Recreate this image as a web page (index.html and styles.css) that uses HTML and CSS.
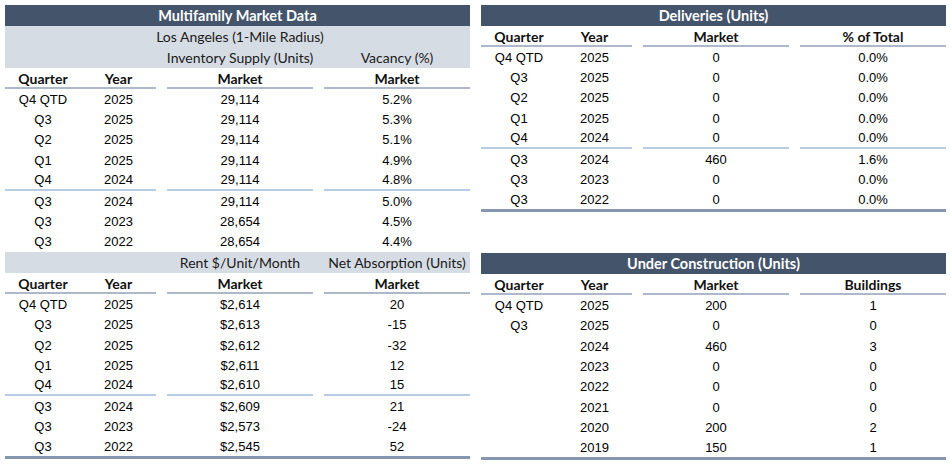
FILE: index.html
```html
<!DOCTYPE html>
<html>
<head>
<meta charset="utf-8">
<link rel="stylesheet" href="styles.css">
</head>
<body>
<div class="page">
  <section class="tbl left">
    <div class="title">Multifamily Market Data</div>
    <div class="band"><span class="c-market">Los Angeles (1-Mile Radius)</span></div>
    <div class="band"><span class="c-market">Inventory Supply (Units)</span><span class="c-last">Vacancy (%)</span></div>
    <div class="row head"><span class="u">Quarter</span><span class="u">Year</span><span></span><span class="u">Market</span><span></span><span class="u">Market</span></div>
    <div class="row"><span>Q4 QTD</span><span>2025</span><span></span><span>29,114</span><span></span><span>5.2%</span></div>
    <div class="row"><span>Q3</span><span>2025</span><span></span><span>29,114</span><span></span><span>5.3%</span></div>
    <div class="row"><span>Q2</span><span>2025</span><span></span><span>29,114</span><span></span><span>5.1%</span></div>
    <div class="row"><span>Q1</span><span>2025</span><span></span><span>29,114</span><span></span><span>4.9%</span></div>
    <div class="row sep"><span class="s">Q4</span><span class="s">2024</span><span></span><span class="s">29,114</span><span></span><span class="s">4.8%</span></div>
    <div class="row"><span>Q3</span><span>2024</span><span></span><span>29,114</span><span></span><span>5.0%</span></div>
    <div class="row"><span>Q3</span><span>2023</span><span></span><span>28,654</span><span></span><span>4.5%</span></div>
    <div class="row"><span>Q3</span><span>2022</span><span></span><span>28,654</span><span></span><span>4.4%</span></div>
    <div class="band"><span class="c-market">Rent $/Unit/Month</span><span class="c-last">Net Absorption (Units)</span></div>
    <div class="row head"><span class="u">Quarter</span><span class="u">Year</span><span></span><span class="u">Market</span><span></span><span class="u">Market</span></div>
    <div class="row"><span>Q4 QTD</span><span>2025</span><span></span><span>$2,614</span><span></span><span>20</span></div>
    <div class="row"><span>Q3</span><span>2025</span><span></span><span>$2,613</span><span></span><span>-15</span></div>
    <div class="row"><span>Q2</span><span>2025</span><span></span><span>$2,612</span><span></span><span>-32</span></div>
    <div class="row"><span>Q1</span><span>2025</span><span></span><span>$2,611</span><span></span><span>12</span></div>
    <div class="row sep"><span class="s">Q4</span><span class="s">2024</span><span></span><span class="s">$2,610</span><span></span><span class="s">15</span></div>
    <div class="row"><span>Q3</span><span>2024</span><span></span><span>$2,609</span><span></span><span>21</span></div>
    <div class="row"><span>Q3</span><span>2023</span><span></span><span>$2,573</span><span></span><span>-24</span></div>
    <div class="row last"><span>Q3</span><span>2022</span><span></span><span>$2,545</span><span></span><span>52</span></div>
  </section>

  <div class="rightcol">
    <section class="tbl">
      <div class="title">Deliveries (Units)</div>
      <div class="row head"><span class="u">Quarter</span><span class="u">Year</span><span></span><span class="u">Market</span><span></span><span class="u">% of Total</span></div>
      <div class="row"><span>Q4 QTD</span><span>2025</span><span></span><span>0</span><span></span><span>0.0%</span></div>
      <div class="row"><span>Q3</span><span>2025</span><span></span><span>0</span><span></span><span>0.0%</span></div>
      <div class="row"><span>Q2</span><span>2025</span><span></span><span>0</span><span></span><span>0.0%</span></div>
      <div class="row"><span>Q1</span><span>2025</span><span></span><span>0</span><span></span><span>0.0%</span></div>
      <div class="row sep"><span class="s">Q4</span><span class="s">2024</span><span></span><span class="s">0</span><span></span><span class="s">0.0%</span></div>
      <div class="row"><span>Q3</span><span>2024</span><span></span><span>460</span><span></span><span>1.6%</span></div>
      <div class="row"><span>Q3</span><span>2023</span><span></span><span>0</span><span></span><span>0.0%</span></div>
      <div class="row last"><span>Q3</span><span>2022</span><span></span><span>0</span><span></span><span>0.0%</span></div>
    </section>

    <section class="tbl uc">
      <div class="title">Under Construction (Units)</div>
      <div class="row head"><span class="u">Quarter</span><span class="u">Year</span><span></span><span class="u">Market</span><span></span><span class="u">Buildings</span></div>
      <div class="row"><span>Q4 QTD</span><span>2025</span><span></span><span>200</span><span></span><span>1</span></div>
      <div class="row"><span>Q3</span><span>2025</span><span></span><span>0</span><span></span><span>0</span></div>
      <div class="row"><span></span><span>2024</span><span></span><span>460</span><span></span><span>3</span></div>
      <div class="row"><span></span><span>2023</span><span></span><span>0</span><span></span><span>0</span></div>
      <div class="row"><span></span><span>2022</span><span></span><span>0</span><span></span><span>0</span></div>
      <div class="row"><span></span><span>2021</span><span></span><span>0</span><span></span><span>0</span></div>
      <div class="row"><span></span><span>2020</span><span></span><span>200</span><span></span><span>2</span></div>
      <div class="row last"><span></span><span>2019</span><span></span><span>150</span><span></span><span>1</span></div>
    </section>
  </div>
</div>
</body>
</html>
```

FILE: styles.css
```css
* { box-sizing: border-box; }
html, body { margin: 0; padding: 0; background: #ffffff; }
.page {
  display: flex;
  gap: 11px;
  padding: 5px;
  width: 951px;
}
.tbl { width: 465px; display: flex; flex-direction: column; }
.rightcol { display: flex; flex-direction: column; }
.uc { margin-top: 41px; }

.title {
  height: 21px;
  background: #44546a;
  color: #ffffff;
  font-family: Lato, "Noto Sans", sans-serif;
  font-weight: 700;
  font-size: 14.5px;
  display: flex;
  align-items: center;
  justify-content: center;
}
.band, .row {
  display: grid;
  grid-template-columns: 76px 75px 11px 146px 11px 146px;
}
.band {
  height: 21px;
  background: #d6dce4;
  font-family: Lato, "Noto Sans", sans-serif;
  font-size: 14px;
  color: #1a1a1a;
}
.band span { display: flex; align-items: center; justify-content: center; white-space: nowrap; }
.band .c-market { grid-column: 4; }
.band .c-last { grid-column: 6; }

.row { height: 20.4px; }
.row span {
  display: flex;
  align-items: center;
  justify-content: center;
  font-family: "Liberation Sans", Arial, sans-serif;
  font-size: 13px;
  color: #000000;
  white-space: nowrap;
}
.row.head { height: 21px; }
.row.head span {
  font-family: Lato, "Noto Sans", sans-serif;
  font-weight: 700;
  font-size: 14px;
  color: #111111;
  padding-top: 1px;
}
.row span.u { border-bottom: 2px solid #adb9ca; }
.row span.s { border-bottom: 2px solid #b8cce4; }
.row.last { box-sizing: content-box; height: 19.4px; border-bottom: 3px solid #8496b0; }
```
